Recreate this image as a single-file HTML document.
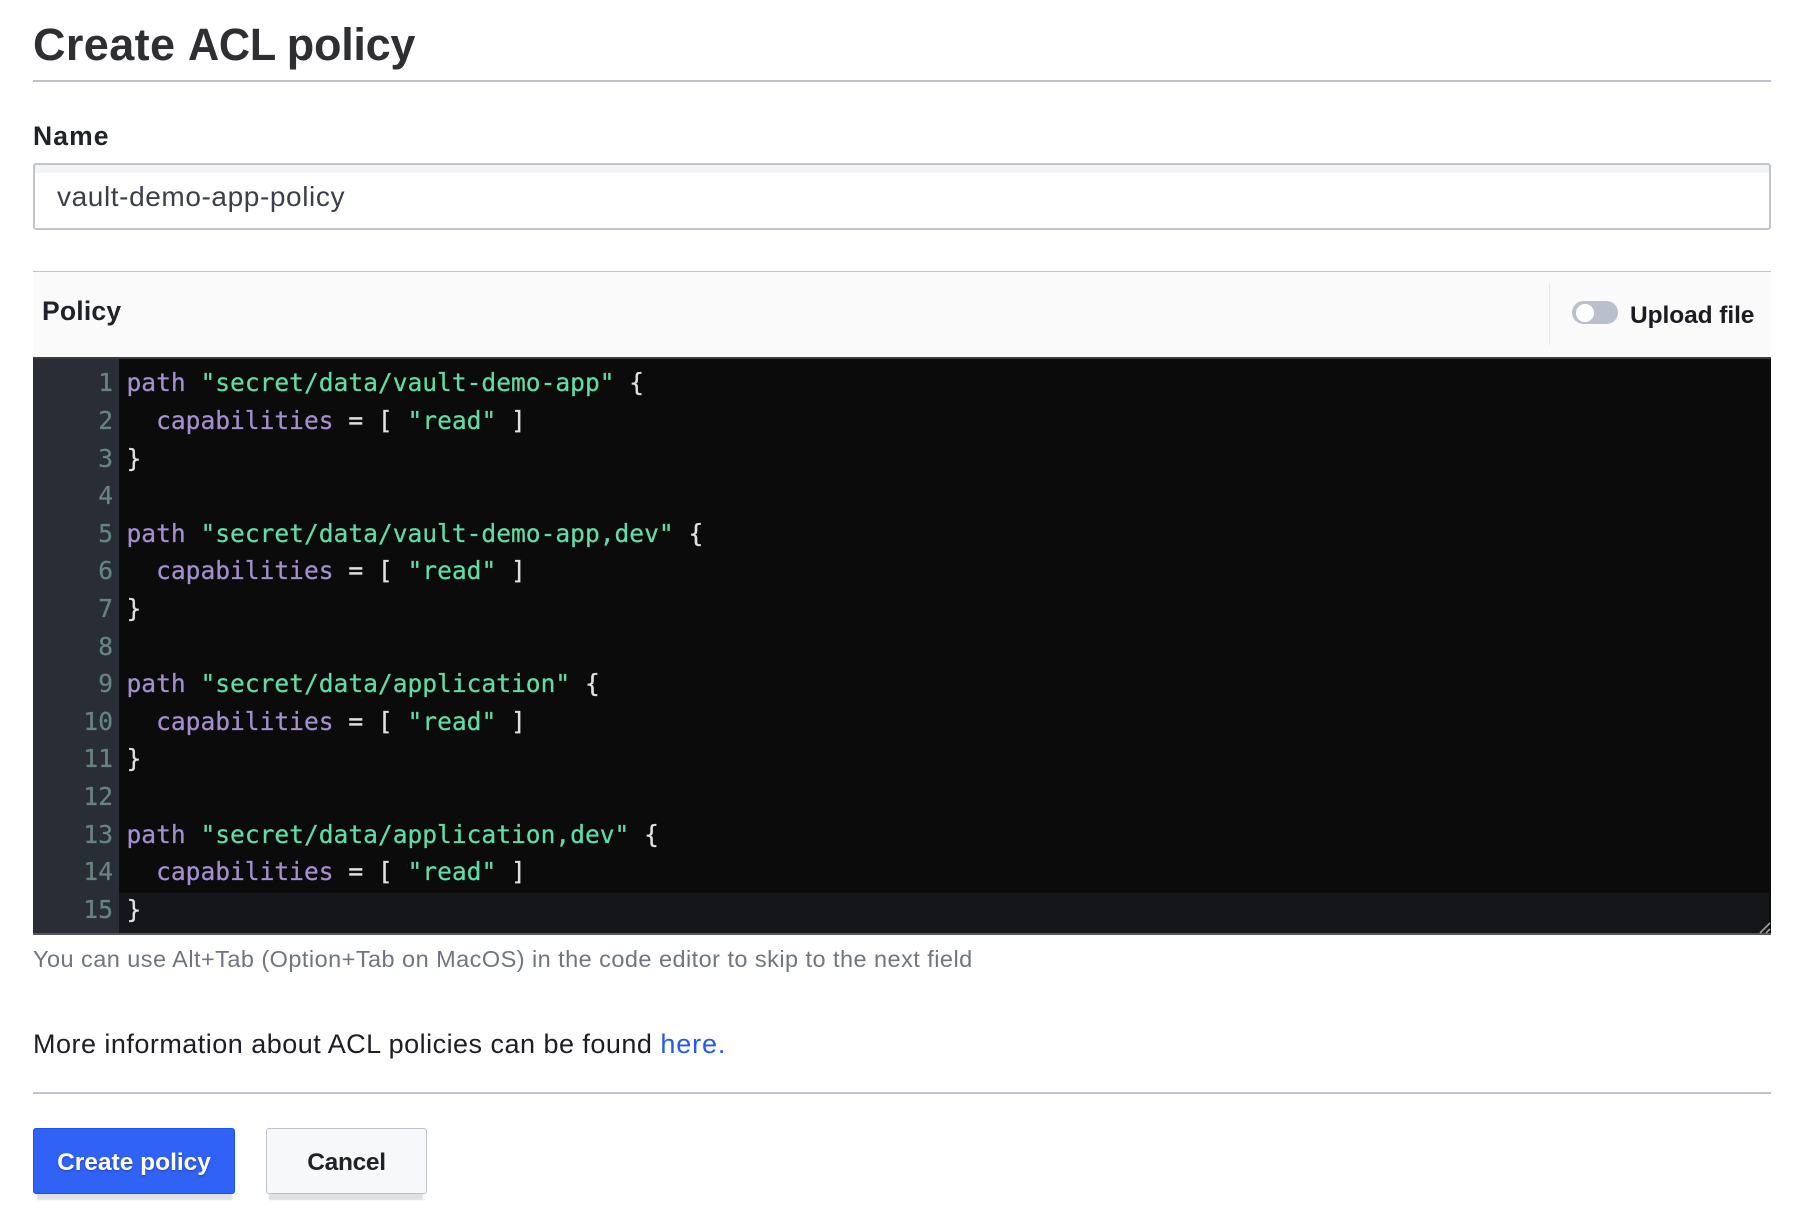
<!DOCTYPE html>
<html><head><meta charset="utf-8"><style>
html,body{margin:0;padding:0;background:#fff}
body{width:1800px;height:1219px;position:relative;overflow:hidden;font-family:"Liberation Sans",sans-serif}
.a{position:absolute;white-space:nowrap}
.t{font-size:45px;line-height:54px;font-weight:700;color:#2e2f33;top:17.5px}
.code{position:absolute;left:126.5px;top:364.4px;font:24.57px/37.6px "DejaVu Sans Mono",monospace;color:#e0e0e0;white-space:pre;-webkit-text-stroke:.25px}
.nums{position:absolute;left:33px;width:80px;top:364.4px;font:24.57px/37.6px "DejaVu Sans Mono",monospace;color:#688480;text-align:right;white-space:pre;-webkit-text-stroke:.25px}
.k{color:#a68fd0}.s{color:#60dca4}
</style></head><body>
<div class="a t" style="left:33px;letter-spacing:.4px">Create</div>
<div class="a t" style="left:187.5px;transform:scaleX(.96);transform-origin:0 0;letter-spacing:-.28px">ACL</div>
<div class="a t" style="left:286.8px;letter-spacing:-.28px">policy</div>
<div class="a" style="left:33px;top:80px;width:1738px;height:2px;background:#bfc3cf"></div>
<div class="a" style="left:33px;top:120px;font-size:26.5px;line-height:32px;font-weight:700;color:#1f2229;letter-spacing:1.1px">Name</div>
<div class="a" style="left:33px;top:163px;width:1734px;height:63px;border:2px solid #bfc4ce;border-radius:3px;box-shadow:inset 0 8px 0 #f4f4f5;background:#fff"></div>
<div class="a" style="left:57px;top:180px;font-size:28px;line-height:34px;color:#3a3f4b;letter-spacing:.6px">vault-demo-app-policy</div>
<div class="a" style="left:33px;top:271px;width:1738px;height:86px;background:#fafafb;border-top:1.5px solid #bfc3cf"></div>
<div class="a" style="left:42px;top:295px;font-size:26.5px;line-height:32px;font-weight:700;color:#1f2229;letter-spacing:.2px">Policy</div>
<div class="a" style="left:1548.5px;top:284px;width:1.5px;height:61px;background:#e4e6ea"></div>
<div class="a" style="left:1572px;top:301px;width:46px;height:23px;background:#b9c0cc;border-radius:12px"></div>
<div class="a" style="left:1576px;top:303.5px;width:18px;height:18px;background:#fff;border-radius:50%"></div>
<div class="a" style="left:1630px;top:299.5px;font-size:24.5px;line-height:32px;font-weight:700;color:#1a1c22;letter-spacing:-.08px">Upload file</div>
<div class="a" style="left:33px;top:357px;width:1738px;height:578px;background:#0b0b0b"></div>
<div class="a" style="left:33px;top:357px;width:1738px;height:2px;background:#3a3c40"></div>
<div class="a" style="left:33px;top:359px;width:86px;height:574px;background:#292d36"></div>
<div class="a" style="left:119px;top:893px;width:1650px;height:40px;background:#141619"></div>
<div class="a" style="left:33px;top:933px;width:1738px;height:2px;background:#55585c"></div>
<svg class="a" style="left:1756px;top:919px" width="16" height="16"><path d="M4 14L14 4M10 14L14 10" stroke="#a0a0a0" stroke-width="1.6" fill="none"/></svg>
<div class="nums">1
2
3
4
5
6
7
8
9
10
11
12
13
14
15</div>
<div class="code"><span class="k">path</span> <span class="s">"secret/data/vault-demo-app"</span> {
  <span class="k">capabilities</span> = [ <span class="s">"read"</span> ]
}

<span class="k">path</span> <span class="s">"secret/data/vault-demo-app,dev"</span> {
  <span class="k">capabilities</span> = [ <span class="s">"read"</span> ]
}

<span class="k">path</span> <span class="s">"secret/data/application"</span> {
  <span class="k">capabilities</span> = [ <span class="s">"read"</span> ]
}

<span class="k">path</span> <span class="s">"secret/data/application,dev"</span> {
  <span class="k">capabilities</span> = [ <span class="s">"read"</span> ]
}</div>
<div class="a" style="left:33px;top:945px;font-size:23.5px;line-height:29px;color:#6f7682;letter-spacing:.455px">You can use Alt+Tab (Option+Tab on MacOS) in the code editor to skip to the next field</div>
<div class="a" style="left:33px;top:1027px;font-size:27px;line-height:34px;color:#1c1e24;letter-spacing:.48px">More information about ACL policies can be found <span style="color:#2457f5;letter-spacing:.85px">here.</span></div>
<div class="a" style="left:33px;top:1092px;width:1738px;height:2px;background:#bfc3cf"></div>
<div class="a" style="left:37px;top:1190px;width:195px;height:10px;background:#dfe0e3;filter:blur(.6px)"></div>
<div class="a" style="left:269px;top:1190px;width:154px;height:10px;background:#dfe0e3;filter:blur(.6px)"></div>
<div class="a" style="left:33px;top:1128px;width:200px;height:64px;background:#3062f5;border:1px solid #1a4ff0;border-radius:3px;color:#fff;font-size:24.5px;line-height:67px;font-weight:700;text-align:center;text-shadow:0 1px 2px rgba(0,0,0,.3)">Create policy</div>
<div class="a" style="left:266px;top:1128px;width:159px;height:64px;background:#f7f8fa;border:1.5px solid #bac1cc;border-radius:3px;color:#1f2229;font-size:24.5px;line-height:67px;font-weight:700;letter-spacing:-.3px;text-align:center">Cancel</div>
</body></html>
